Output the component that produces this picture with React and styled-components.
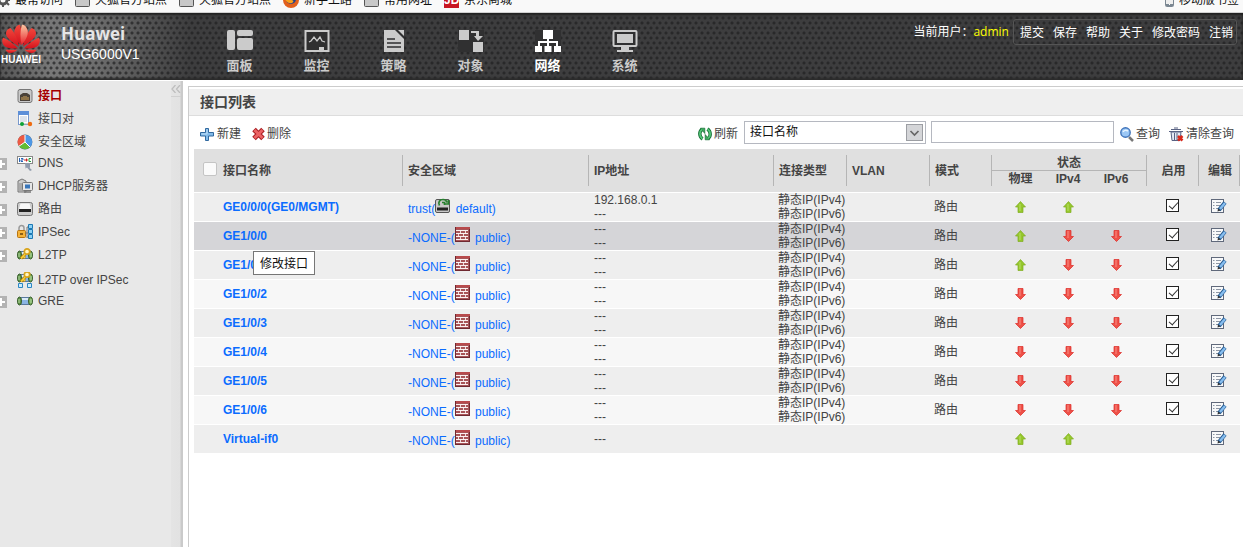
import React from "react";
import styled, { createGlobalStyle, css } from "styled-components";

const GlobalStyle = createGlobalStyle`
  * {
    box-sizing: border-box;
  }

  body {
    margin: 0;
    background-color: #fff;
    color: #444;
    font-family: "Liberation Sans", "Noto Sans CJK SC", sans-serif;
    font-size: 12px;
    line-height: 16px;
  }

  a {
    color: inherit;
    text-decoration: none;
  }

  svg {
    display: block;
    flex: none;
  }
`;

const Page = styled.div`
  min-height: 100vh;
  display: flex;
  flex-direction: column;
`;

/* ---------- bookmarks ---------- */

const BookmarkBar = styled.nav`
  height: 13px;
  padding: 0 4px 3px 0;
  overflow: hidden;
  display: flex;
  align-items: flex-end;
  gap: 12px;
  background-color: #f9f9f9;
  border-bottom: 1px solid #d0d0d0;
`;

const Bookmark = styled.a`
  display: flex;
  align-items: center;
  gap: 5px;
  height: 18px;
  color: #111;
  white-space: nowrap;
  margin-left: ${props => (props.$last ? "auto" : "0")};
`;

const JdMark = styled.span`
  width: 15px;
  height: 16px;
  line-height: 17px;
  background-color: #c81623;
  color: #fff;
  font-size: 12px;
  font-weight: bold;
  text-align: center;
`;

/* ---------- header ---------- */

const Header = styled.header`
  display: flex;
  height: 67px;
  background-color: #3d3d3e;
  background-image: radial-gradient(circle, rgba(32, 32, 33, 0.7) 1px, transparent 2px),
    radial-gradient(circle, rgba(32, 32, 33, 0.7) 1px, transparent 2px),
    linear-gradient(
      90deg,
      #555 0,
      #777 50px,
      #707070 90px,
      rgba(61, 61, 62, 0) 190px
    );
  background-size: 6px 10px, 6px 10px, 100% 100%;
  background-position: 0 0, 3px 5px, 0 0;
  box-shadow: inset 0 2px 2px #222, inset 0 -2px 2px #2c2c2c;
`;

const Brand = styled.div`
  width: 201px;
  display: flex;
  gap: 20px;
  padding: 11px 0 0 1px;
  color: #fff;
`;

const Logo = styled.div`
  width: 40px;
  font-size: 10px;
  line-height: 10px;
  font-weight: bold;
`;

const Product = styled.div`
  font-size: 14px;
  line-height: 20px;
`;

const ProductName = styled.div`
  color: #e6e6e6;
  font-family: "Open Sans", "Noto Sans", sans-serif;
  font-size: 17px;
  font-weight: bold;
`;

const MainNav = styled.nav`
  display: flex;
  flex: 1;
`;

const NavItem = styled.a`
  width: 77px;
  display: flex;
  flex-direction: column;
  align-items: center;
  gap: 4px;
  padding-top: 16px;
  font-size: 13px;
  line-height: 18px;
  font-weight: bold;
  color: ${props => (props.$active ? "#fff" : "#cbcbcb")};
`;

const UserArea = styled.div`
  display: flex;
  align-items: flex-start;
  gap: 4px;
  padding: 6px 6px 0 0;
  color: #fff;
  line-height: 26px;
`;

const UserName = styled.span`
  color: #ff0;
  font-family: "Open Sans", "Noto Sans", sans-serif;
`;

const UserMenu = styled.nav`
  display: flex;
  gap: 9px;
  height: 26px;
  padding: 0 3px 0 6px;
  border: 1px solid #555;
  border-radius: 3px;
`;

/* ---------- sidebar ---------- */

const Body = styled.div`
  flex: 1;
  display: flex;
  gap: 5px;
  padding-top: 1px;
`;

const Sidebar = styled.aside`
  width: 183px;
  flex: none;
  display: flex;
  background-color: #e8e8e8;
`;

const Tree = styled.ul`
  flex: 1;
  margin: 0;
  padding: 3px 0 0;
  list-style: none;
`;

const TreeItem = styled.li`
  height: 23px;
  display: flex;
  align-items: center;
  ${props =>
    props.$branch
      ? css`
          padding-bottom: 3px;
        `
      : css`
          padding: 1px 0 0 17px;
        `}
`;

const ExpandButton = styled.button`
  width: 17px;
  padding: 2px 0 0;
  border: 0;
  background: none;
`;

const TreeLink = styled.a`
  display: flex;
  align-items: center;
  gap: 5px;
  color: ${props => (props.$active ? "#a50000" : "#444")};
  font-weight: ${props => (props.$active ? "bold" : "normal")};
`;

const CollapseRail = styled.div`
  width: 12px;
  background: linear-gradient(90deg, #e4e4e4 0, #e2e2e2 9px, #cacaca 10px);
`;

const CollapseButton = styled.button`
  width: 10px;
  height: 16px;
  padding: 0;
  border: 0;
  border-bottom: 1px solid #d0d0d0;
  background: none;
`;

/* ---------- panel ---------- */

const Panel = styled.main`
  flex: 1;
  min-width: 0;
  margin-top: 5px;
  border: 1px solid #ccc;
  border-width: 1px 0 0 1px;
`;

const PanelTitle = styled.h1`
  margin: 2px 0 0;
  padding: 0 11px;
  background-color: #efefef;
  border-bottom: 1px solid #ddd;
  font-size: 14px;
  line-height: 26px;
  font-weight: bold;
`;

const Toolbar = styled.div`
  display: flex;
  align-items: center;
  height: 33px;
  padding: 0 9px 0 11px;
`;

const ToolButton = styled.button`
  display: flex;
  align-items: center;
  gap: 2px;
  margin: 3px 11px 0 0;
  padding: 0;
  border: 0;
  background: none;
  color: #444;
  font: inherit;
  white-space: nowrap;
`;

const SearchForm = styled.form`
  display: flex;
  align-items: center;
  margin-left: auto;

  ${ToolButton} {
    margin-right: 6px;
  }

  ${ToolButton}:last-child {
    margin: 3px 0 0 3px;
  }
`;

const SelectBox = styled.span`
  position: relative;
  margin: 0 5px 1px 0;

  svg {
    position: absolute;
    top: 3px;
    right: 3px;
    pointer-events: none;
  }
`;

const Select = styled.select`
  display: block;
  appearance: none;
  width: 182px;
  height: 23px;
  padding: 0 5px;
  border: 1px solid #b5b8c0;
  border-radius: 0;
  background-color: #fff;
  color: #111;
  font: inherit;
`;

const SearchInput = styled.input`
  width: 183px;
  height: 22px;
  margin: 0 6px 2px 0;
  padding: 0 6px;
  border: 1px solid #b5b8c0;
  font: inherit;
`;

/* ---------- table ---------- */

const TableWrap = styled.div`
  padding: 0 3px 0 5px;
`;

const Table = styled.table`
  width: 100%;
  table-layout: fixed;
  border-collapse: separate;
  border-spacing: 0;
`;

const HeadRow = styled.tr`
  height: ${props => (props.$lower ? "21px" : "22px")};
  background-color: #e0e0e0;
`;

const HeadCell = styled.th`
  padding: 0;
  text-align: ${props => (props.$center ? "center" : "left")};
  vertical-align: ${props => props.$valign || "middle"};
`;

const HeadLabel = styled.div`
  display: flex;
  align-items: center;
  justify-content: ${props => (props.$center ? "center" : "flex-start")};
  height: 31px;
  padding: 1px 0 0 ${props => (props.$center ? "2px" : "5px")};
  border-left: 1px solid #b5b5b5;
  border-right: ${props => (props.$last ? "1px solid #b5b5b5" : "0")};
`;

const NameLabel = styled.label`
  display: flex;
  align-items: center;
  gap: 6px;
  padding-left: 9px;
`;

const GroupLabel = styled.div`
  height: 16px;
  line-height: 16px;
  border-left: 1px solid #b5b5b5;
  border-bottom: 1px solid #b5b5b5;
`;

const SubLabel = styled.div`
  height: 15px;
  line-height: 16px;
  border-left: ${props => (props.$first ? "1px solid #b5b5b5" : "0")};
  padding: ${props => props.$pad || "0"};
`;

const SelectAll = styled.input`
  appearance: none;
  width: 14px;
  height: 14px;
  margin: 0 0 3px;
  border: 1px solid #c4c4c4;
  border-radius: 2px;
  background-color: #fafafa;
`;

const rowColor = props => {
  if (props.$hovered) return "#d5d5d8";
  return props.$striped ? "#f7f7f7" : "#eee";
};

const Row = styled.tr`
  height: 29px;
  background-color: ${rowColor};
`;

const Cell = styled.td`
  position: relative;
  height: 29px;
  padding: ${props => props.$pad || "0 0 0 6px"};
  border-top: 1px solid #fff;
  line-height: 14px;
  text-align: ${props => (props.$center ? "center" : "left")};
  white-space: nowrap;

  > svg {
    margin: 0 auto 1px;
  }
`;

const NameLink = styled.a`
  color: #0b6cff;
  font-weight: bold;
`;

const ZoneLink = styled.a`
  display: block;
  color: #0b6cff;
  line-height: 16px;

  svg {
    display: inline-block;
    margin-right: 2px;
    vertical-align: baseline;
  }
`;

const EnableBox = styled.input`
  appearance: none;
  display: block;
  width: 13px;
  height: 13px;
  margin: 0 auto 3px;
  border: 1px solid #222;
  background-color: #fff;

  &:checked::after {
    content: "";
    display: block;
    width: 8px;
    height: 4px;
    margin: 2px 0 0 2px;
    border: solid #333;
    border-width: 0 0 1px 1px;
    transform: rotate(-48deg);
  }
`;

const EditButton = styled.button`
  padding: 0;
  border: 0;
  background: none;
  display: block;
  margin: 0 auto 2px;
`;

const Tooltip = styled.span`
  position: absolute;
  z-index: 1;
  top: 29px;
  left: 59px;
  padding: 4px 6px 2px;
  border: 1px solid #767676;
  background-color: #fff;
  color: #111;
  line-height: 16px;
`;

/* ---------- icons ---------- */

const Gear = () => (
  <svg width="10" height="16" viewBox="0 0 10 16">
    <circle cx="3" cy="8" r="4" fill="none" stroke="#555" strokeWidth="3" />
    <path d="M3 13v2M7 11l2 2M8 8h2M-1 12l-1 2" stroke="#555" strokeWidth="2" />
  </svg>
);

const Folder = () => (
  <svg width="15" height="16" viewBox="0 0 15 16">
    <rect x=".5" y="2.5" width="14" height="12" rx="1" fill="#c8c8c8" stroke="#555" />
  </svg>
);

const Firefox = () => (
  <svg width="16" height="16" viewBox="0 0 16 16">
    <circle cx="8" cy="8" r="8" fill="#e2601c" />
    <circle cx="8" cy="7" r="5" fill="#23438e" />
    <path d="M2 7c2 1 4 0 6 1 3 0 3 2 1 3-3 1-6-1-7-4z" fill="#f9a11b" />
  </svg>
);

const Phone = () => (
  <svg width="9" height="16" viewBox="0 0 9 16">
    <rect x=".5" y="1.5" width="8" height="13" rx="1" fill="#eee" stroke="#7b8792" />
    <path d="M1 12h7v2H1z" fill="#7b8792" />
    <path d="M4 12h1v1H4z" fill="#fff" />
  </svg>
);

const Petals = () => (
  <>
    <path d="M19.4 21C14 15 12 9 14 5C15.2 2 17 1 19 .8C21 7 21 14 19.4 21z" />
    <path d="M18 22.5C10 18 4.6 13 5 9C5.2 6.5 7 4.5 9.5 4C14 9 17 16 18 22.5z" />
    <path d="M17 24.5C10 25 5 24 2.5 21C.6 18.5 1 15.5 2 13.5C8 16 13 20 17 24.5z" />
    <path d="M16.5 25.8H4.5C6 29.5 11 30.5 16.5 25.8z" />
  </>
);

const HuaweiFlower = () => (
  <svg width="40" height="31" viewBox="0 0 40 31">
    <defs>
      <linearGradient id="petal" x1="0" y1="0" x2="0" y2="1">
        <stop offset="0" stopColor="#f2473c" />
        <stop offset="1" stopColor="#d3101c" />
      </linearGradient>
      <linearGradient id="shine" x1="0" y1="0" x2="0" y2="1">
        <stop offset="0" stopColor="#f9c9a4" />
        <stop offset="1" stopColor="#e8202a" />
      </linearGradient>
    </defs>
    <g fill="url(#petal)">
      <Petals />
      <g transform="translate(40 0) scale(-1 1)">
        <Petals />
      </g>
    </g>
    <path d="M20.6 21C26 15 28 9 26 5C24.8 2 23 1 21 .8C19 7 19 14 20.6 21z" fill="url(#shine)" />
  </svg>
);

const navIcons = {
  panel: (
    <g fill="#cbcbcb">
      <rect x="0" y="1" width="8" height="20" rx="2" />
      <rect x="10" y="1" width="16" height="6" rx="2" />
      <rect x="10" y="9" width="16" height="12" rx="2" />
    </g>
  ),
  monitor: (
    <g fill="none" stroke="#cbcbcb">
      <rect x="1.5" y="2" width="23" height="20" fill="#2f2f30" strokeWidth="2" />
      <path d="M5 13l2-1 3-4 3 4 3-4 2 4 3 1" strokeWidth="1.3" />
      <path d="M15 19.5h5" strokeWidth="3" />
    </g>
  ),
  policy: (
    <g>
      <path d="M3 1h20v22H3z" fill="#303031" />
      <path d="M3 1h11l9 9v13H3z" fill="#cbcbcb" />
      <path d="M17 1h6v6z" fill="#cbcbcb" />
      <path d="M6 10h8M6 14h14M6 18h14" stroke="#2f2f30" strokeWidth="1.5" />
    </g>
  ),
  object: (
    <g fill="#cbcbcb">
      <path d="M0 1h26v22H0z" fill="#303031" />
      <path d="M1 1h10v10H1zM15 13h10v10H15zM13 2h8v5h4l-5 5-4-5h2V4h-5z" />
    </g>
  ),
  network: (
    <g fill="#fff">
      <path d="M0 1h26v22H0z" fill="#303031" />
      <path d="M8 1h10v9H8zM0 17h7v6H0zM9.5 17h7v6h-7zM19 17h7v6h-7z" />
      <path d="M13 10v7M4 17v-4h18v4" fill="none" stroke="#fff" strokeWidth="2" />
    </g>
  ),
  system: (
    <g>
      <rect x="1.5" y="2" width="23" height="15" rx="1" fill="#303031" stroke="#cbcbcb" strokeWidth="2" />
      <path d="M5 5h16v9H5zM9 18h8v3h4v2H5v-2h4z" fill="#cbcbcb" />
    </g>
  )
};

function Tunnel() {
  return (
    <g>
      <rect x="2" y="4.5" width="12" height="7" fill="#8ab4e4" stroke="#59799d" />
      <path d="M4 6h8" stroke="#d9eafa" strokeWidth="2" />
      <ellipse cx="2.5" cy="8" rx="2" ry="4" fill="#5f9447" stroke="#385c2c" />
      <ellipse cx="13.5" cy="8" rx="2" ry="4" fill="#78ae5c" stroke="#385c2c" />
      <path d="M2 6v4M14 6v4" stroke="#b8dca6" />
    </g>
  );
}

function Key() {
  return (
    <g>
      <path d="M9 6l-5 5.5M6 9l2 2" stroke="#b9830b" strokeWidth="3" />
      <path d="M9 6l-5 5.5M6 9l2 2" stroke="#f7cf3c" strokeWidth="1.5" />
      <circle cx="10" cy="4.5" r="2.7" fill="#fff6c4" stroke="#d9a41c" strokeWidth="1.7" />
    </g>
  );
}

const treeIcons = {
  port: (
    <g>
      <rect x="1" y="1.5" width="14" height="13" rx="2" fill="#c9c9c9" stroke="#777" />
      <path d="M3 13V7l3-2h4l3 2v6z" fill="#4b4239" />
      <path d="M5 9v3M7 8v4M9 8v4M11 9v3" stroke="#d3a55b" />
    </g>
  ),
  pair: (
    <g>
      <rect x="1.5" y=".5" width="10" height="13" fill="#fff" stroke="#7898cc" />
      <path d="M1 0h11v4H1z" fill="#5d8fd8" />
      <path d="M3 6h7M3 8h7M3 10h7" stroke="#bbc7d8" />
      <path d="M5 13h8" stroke="#aaa" />
      <circle cx="5" cy="13" r="2" fill="#0ca336" />
      <circle cx="13" cy="13" r="2.2" fill="#ee6b10" />
    </g>
  ),
  zone: (
    <g>
      <circle cx="8" cy="8" r="7.4" fill="#4d6f8f" />
      <path d="M8 8L2 12.2A7 7 0 0 1 8 1z" fill="#ec5a43" />
      <path d="M8 8V1a7 7 0 0 1 5 12z" fill="#4d97e6" />
      <path d="M8 8l5 5A7 7 0 0 1 2 12.200z" fill="#62bd35" />
      <path d="M8 1v7l5 5M8 8l-6 4.2" fill="none" stroke="#fff" />
    </g>
  ),
  dns: (
    <g>
      <rect x=".5" y="1.5" width="15" height="7" fill="#fff" stroke="#888" />
      <path d="M2.5 3v4M4 3.5h2v1.5H4v1.5h2" fill="none" stroke="#2a66b5" />
      <path d="M7 5h4M9.5 3.5v3" stroke="#c22" />
      <path d="M14 3.5h-2v3h2" fill="none" stroke="#229b3d" />
      <path d="M8 8h5v5l-1.500-1L15 15l-2 1-3-3.500-1.500 1z" fill="#919cad" />
    </g>
  ),
  dhcp: (
    <g>
      <path d="M1 3l4-2 4 2v11H1z" fill="#ccc" stroke="#777" />
      <path d="M3 5v8M5 5v8" stroke="#888" />
      <rect x="5.5" y="4.5" width="10" height="8" rx="1" fill="#e6e6e6" stroke="#777" />
      <path d="M8 6.500h5v4H8z" fill="#3976ba" />
      <path d="M7 14h7" stroke="#777" strokeWidth="1.5" />
    </g>
  ),
  route: (
    <g>
      <rect x=".5" y="1.5" width="15" height="13" rx="2" fill="#ccc" stroke="#777" />
      <path d="M3.5 2.5h9l1.500 5.500H2z" fill="#f8f8f8" />
      <path d="M2 8h12v3H2z" fill="#222" />
    </g>
  ),
  ipsec: (
    <g>
      <path d="M2 7V4a2.500 2.500 0 0 1 5 0v3" fill="none" stroke="#999" strokeWidth="1.5" />
      <rect x=".5" y="6.5" width="8" height="7" rx="1" fill="#f5b33a" stroke="#b9740f" />
      <path d="M3 9h3v2H3z" fill="#8d5e14" />
      <path d="M8 9h3M10 3v11M10 3h2M10 13h2" fill="none" stroke="#777" />
      <path d="M11.500 .5h4v4h-4zM11.500 5.500h4v4h-4zM11.500 10.500h4v4h-4z" fill="#8bd1f5" stroke="#1c79b5" />
    </g>
  ),
  l2tp: (
    <g>
      <Tunnel />
      <Key />
    </g>
  ),
  l2tpIpsec: (
    <g>
      <g transform="translate(0 -2)">
        <Tunnel />
        <Key />
      </g>
      <path d="M1.500 11.500h4v4h-4zM10.500 11.500h4v4h-4z" fill="#cdeafa" stroke="#2a87c4" />
    </g>
  ),
  gre: <Tunnel />
};

const Plus = () => (
  <svg width="7" height="12" viewBox="0 0 7 12">
    <path d="M0 0h7v12H0z" fill="#b3b3b3" />
    <path d="M0 6h5M1 2v8" stroke="#fff" strokeWidth="2" />
  </svg>
);

const Chevrons = () => (
  <svg width="10" height="8" viewBox="0 0 10 8">
    <path d="M4.5 0L1 4l3.500 4M9 0L5.500 4 9 8" fill="none" stroke="#bdbdbd" strokeWidth="1.3" />
  </svg>
);

const AddIcon = () => (
  <svg width="15" height="15" viewBox="0 0 15 15">
    <path d="M5.5 1.5h3v4h5v3.500h-5v4.500h-3V9h-5V5.500h5z" fill="#83bbe9" stroke="#31699f" strokeLinejoin="round" />
    <path d="M7 2.5V7H1.500" fill="none" stroke="#c2e0f8" />
  </svg>
);

const DeleteIcon = () => (
  <svg width="13" height="14" viewBox="0 0 13 14">
    <path d="M2 2.500l9 9M11 2.500l-9 9" stroke="#a91e22" strokeWidth="5" />
    <path d="M2.500 3l8 8M10.500 3l-8 8" stroke="#ec6263" strokeWidth="3" />
  </svg>
);

const RefreshIcon = () => (
  <svg width="14" height="14" viewBox="0 0 14 14">
    <path d="M4.5 12C1 9.500 1 4.500 4 2.500M9.500 2C13 4.500 13 9.500 10 11.500" fill="none" stroke="#146d34" strokeWidth="3.4" />
    <path d="M2.500 1.200h4.300v5.300zM11.500 12.800H7.200V7.500z" fill="#3bab5c" stroke="#146d34" strokeWidth=".7" />
    <path d="M4.5 12C1 9.500 1 4.500 4 2.500M9.500 2C13 4.500 13 9.500 10 11.500" fill="none" stroke="#52c476" strokeWidth="1.8" />
  </svg>
);

const SearchIcon = () => (
  <svg width="14" height="15" viewBox="0 0 14 15">
    <path d="M9 10l4 4" stroke="#777" strokeWidth="2.5" />
    <circle cx="5.5" cy="5.5" r="4.7" fill="#9bc7f5" stroke="#3f73ba" strokeWidth="1.4" />
    <path d="M3 5c1-2 3-2 5-1" fill="none" stroke="#e9f5ff" strokeWidth="1.5" />
  </svg>
);

const ClearIcon = () => (
  <svg width="15" height="15" viewBox="0 0 15 15">
    <path d="M2 5h10l-1 8.500H3z" fill="#e5eaf4" stroke="#596283" />
    <path d="M0 4.500h14M2 2.500h10M5 1h4M5.500 6v7M8 6v7" stroke="#596283" />
    <path d="M9 9l4.500 4.500M13.500 9L9 13.500" stroke="#d9281a" strokeWidth="2.5" />
  </svg>
);

const SelectArrow = () => (
  <svg width="17" height="17" viewBox="0 0 17 17">
    <rect x=".5" y=".5" width="16" height="16" fill="#d4d5d8" stroke="#9c9ea3" />
    <path d="M4.500 7l4 4 4-4" fill="none" stroke="#666" strokeWidth="1.7" />
  </svg>
);

const RouterIcon = () => (
  <svg width="15" height="15" viewBox="0 0 15 15">
    <rect x=".5" y="1.500" width="14" height="13" rx="1.500" fill="#c8c8c8" stroke="#555" />
    <path d="M2 9.500h11v3H2z" fill="#222" />
    <path d="M4.500 7.500C2.500 4 5 1.500 8 1.500c2 0 3.500 1 4 3M13.500 2v4H9.500M7 4.500h2.500v2.500" fill="none" stroke="#27802e" strokeWidth="1.7" />
  </svg>
);

const WallIcon = () => (
  <svg width="15" height="15" viewBox="0 0 15 15">
    <path d="M0 0h15v15H0z" fill="#6f2931" />
    <path d="M1 0h14v2H1z" fill="#b84a4c" />
    <path d="M1 2h13v12H1z" fill="#a85558" />
    <path d="M1 3.500h12M1 6.500h12M1 9.500h12M1 12.500h12" stroke="#fbf2f2" />
    <path d="M5.500 4v2M10.500 4v2M3.500 7v2M8.500 7v2M5.500 10v2M10.500 10v2" stroke="#f0dcdc" />
  </svg>
);

const StateArrow = ({ up }) => (
  <svg width="11" height="12" viewBox="0 0 11 12" role="img" aria-label={up ? "up" : "down"}>
    {up ? (
      <path d="M5.5.5L10.500 6H8v5.500H3V6H.5z" fill="#95c72c" stroke="#80ad20" strokeWidth=".7" />
    ) : (
      <path d="M5.5 11.500L.5 6.500H3V.5h5v6h2.500z" fill="#ee5148" stroke="#dc2a25" strokeWidth=".7" />
    )}
    <path d={up ? "M5 3v7" : "M5 1v7"} stroke={up ? "#badf66" : "#f88d84"} />
  </svg>
);

const EditIcon = () => (
  <svg width="16" height="15" viewBox="0 0 16 15">
    <rect x=".5" y=".5" width="12" height="13" fill="#f8f9fa" stroke="#60697b" />
    <path d="M2 3.500h1.500M2 6.500h1.500M2 9.500h1.500M5 3.500h5M5 6.500h4M5 9.500h2" stroke="#8d96a4" />
    <path d="M14 3.500L8 11" stroke="#255b92" strokeWidth="4" />
    <path d="M14 4L9 10" stroke="#86bdef" strokeWidth="2.5" />
    <path d="M6.500 12.500l.5-3 2.500 2z" fill="#333" />
  </svg>
);

/* ---------- data ---------- */

const bookmarks = [
  { text: "最常访问", icon: <Gear /> },
  { text: "火狐官方站点", icon: <Folder /> },
  { text: "火狐官方站点", icon: <Folder /> },
  { text: "新手上路", icon: <Firefox /> },
  { text: "常用网址", icon: <Folder /> },
  { text: "京东商城", icon: <JdMark>JD</JdMark> },
  { text: "移动版书签", icon: <Phone /> }
];

const navItems = [
  { text: "面板", icon: "panel" },
  { text: "监控", icon: "monitor" },
  { text: "策略", icon: "policy" },
  { text: "对象", icon: "object" },
  { text: "网络", icon: "network", active: true },
  { text: "系统", icon: "system" }
];

const userLinks = ["提交", "保存", "帮助", "关于", "修改密码", "注销"];

const treeItems = [
  { text: "接口", icon: "port", active: true },
  { text: "接口对", icon: "pair" },
  { text: "安全区域", icon: "zone" },
  { text: "DNS", icon: "dns", branch: true },
  { text: "DHCP服务器", icon: "dhcp", branch: true },
  { text: "路由", icon: "route", branch: true },
  { text: "IPSec", icon: "ipsec", branch: true },
  { text: "L2TP", icon: "l2tp", branch: true },
  { text: "L2TP over IPSec", icon: "l2tpIpsec" },
  { text: "GRE", icon: "gre", branch: true }
];

const columnWidths = [208, 186, 185, 73, 83, 62, 53, 48, 54, 52, 42];

const port = (name, states, extra) => ({
  name,
  zone: "-NONE-",
  system: "public",
  ip: ["---", "---"],
  types: ["静态IP(IPv4)", "静态IP(IPv6)"],
  mode: "路由",
  enabled: true,
  states,
  ...extra
});

const interfaces = [
  port("GE0/0/0(GE0/MGMT)", ["up", "up"], {
    zone: "trust",
    system: "default",
    ip: ["192.168.0.1", "---"]
  }),
  port("GE1/0/0", ["up", "down", "down"], { hovered: true }),
  port("GE1/0/1", ["up", "down", "down"]),
  port("GE1/0/2", ["down", "down", "down"]),
  port("GE1/0/3", ["down", "down", "down"]),
  port("GE1/0/4", ["down", "down", "down"]),
  port("GE1/0/5", ["down", "down", "down"]),
  port("GE1/0/6", ["down", "down", "down"]),
  port("Virtual-if0", ["up", "up"], {
    ip: ["---"],
    types: [],
    mode: "",
    enabled: false
  })
];

const statePads = ["0 0 0 5px", "0", "0 6px 0 0"];

function InterfaceRow({ item, striped }) {
  return (
    <Row $striped={striped} $hovered={item.hovered}>
      <Cell $pad="0 0 0 29px">
        <NameLink href="#">{item.name}</NameLink>
        {item.hovered && <Tooltip role="tooltip">修改接口</Tooltip>}
      </Cell>
      <Cell>
        <ZoneLink href="#">
          {item.zone}({item.zone === "trust" ? <RouterIcon /> : <WallIcon />}{" "}
          {item.system})
        </ZoneLink>
      </Cell>
      <Cell>
        {item.ip.map((line, i) => (
          <div key={i}>{line}</div>
        ))}
      </Cell>
      <Cell $pad="0 0 0 5px">
        {item.types.map(line => (
          <div key={line}>{line}</div>
        ))}
      </Cell>
      <Cell />
      <Cell $pad="0 0 0 5px">{item.mode}</Cell>
      {statePads.map((pad, i) => (
        <Cell key={i} $center $pad={pad}>
          {item.states[i] && <StateArrow up={item.states[i] === "up"} />}
        </Cell>
      ))}
      <Cell $center $pad="0">
        {item.enabled && (
          <EnableBox type="checkbox" defaultChecked aria-label={`启用 ${item.name}`} />
        )}
      </Cell>
      <Cell $center $pad="0">
        <EditButton type="button" aria-label={`编辑 ${item.name}`}>
          <EditIcon />
        </EditButton>
      </Cell>
    </Row>
  );
}

function InterfaceTable() {
  return (
    <Table>
      <colgroup>
        {columnWidths.map((width, i) => (
          <col key={i} width={width} />
        ))}
      </colgroup>
      <thead>
        <HeadRow>
          <HeadCell rowSpan={2}>
            <NameLabel>
              <SelectAll type="checkbox" />
              接口名称
            </NameLabel>
          </HeadCell>
          {["安全区域", "IP地址", "连接类型", "VLAN", "模式"].map(text => (
            <HeadCell key={text} rowSpan={2}>
              <HeadLabel>{text}</HeadLabel>
            </HeadCell>
          ))}
          <HeadCell colSpan={3} $center $valign="bottom">
            <GroupLabel>状态</GroupLabel>
          </HeadCell>
          <HeadCell rowSpan={2}>
            <HeadLabel $center>启用</HeadLabel>
          </HeadCell>
          <HeadCell rowSpan={2}>
            <HeadLabel $center $last>
              编辑
            </HeadLabel>
          </HeadCell>
        </HeadRow>
        <HeadRow $lower>
          {["物理", "IPv4", "IPv6"].map((text, i) => (
            <HeadCell key={text} $center $valign="top">
              <SubLabel $first={i === 0} $pad={statePads[i]}>
                {text}
              </SubLabel>
            </HeadCell>
          ))}
        </HeadRow>
      </thead>
      <tbody>
        {interfaces.map((item, i) => (
          <InterfaceRow key={item.name} item={item} striped={i % 2 === 1} />
        ))}
      </tbody>
    </Table>
  );
}

export default function App() {
  return (
    <Page>
      <GlobalStyle />
      <BookmarkBar>
        {bookmarks.map((item, i) => (
          <Bookmark key={i} href="#" $last={i === bookmarks.length - 1}>
            {item.icon}
            {item.text}
          </Bookmark>
        ))}
      </BookmarkBar>
      <Header>
        <Brand>
          <Logo>
            <HuaweiFlower />
            HUAWEI
          </Logo>
          <Product>
            <ProductName>Huawei</ProductName>
            USG6000V1
          </Product>
        </Brand>
        <MainNav>
          {navItems.map(item => (
            <NavItem key={item.text} href="#" $active={item.active}>
              <svg width="26" height="24" viewBox="0 0 26 24">
                {navIcons[item.icon]}
              </svg>
              {item.text}
            </NavItem>
          ))}
        </MainNav>
        <UserArea>
          <span>
            当前用户：<UserName>admin</UserName>
          </span>
          <UserMenu>
            {userLinks.map(text => (
              <a key={text} href="#">
                {text}
              </a>
            ))}
          </UserMenu>
        </UserArea>
      </Header>
      <Body>
        <Sidebar>
          <Tree>
            {treeItems.map(item => (
              <TreeItem key={item.text} $branch={item.branch}>
                {item.branch && (
                  <ExpandButton type="button" aria-label={item.text}>
                    <Plus />
                  </ExpandButton>
                )}
                <TreeLink href="#" $active={item.active}>
                  <svg width="16" height="16" viewBox="0 0 16 16">
                    {treeIcons[item.icon]}
                  </svg>
                  {item.text}
                </TreeLink>
              </TreeItem>
            ))}
          </Tree>
          <CollapseRail>
            <CollapseButton type="button" aria-label="收起">
              <Chevrons />
            </CollapseButton>
          </CollapseRail>
        </Sidebar>
        <Panel>
          <PanelTitle>接口列表</PanelTitle>
          <Toolbar>
            <ToolButton type="button">
              <AddIcon />
              新建
            </ToolButton>
            <ToolButton type="button">
              <DeleteIcon />
              删除
            </ToolButton>
            <SearchForm>
              <ToolButton type="button">
                <RefreshIcon />
                刷新
              </ToolButton>
              <SelectBox>
                <Select aria-label="查询条件">
                  <option>接口名称</option>
                </Select>
                <SelectArrow />
              </SelectBox>
              <SearchInput type="text" aria-label="关键字" />
              <ToolButton type="button">
                <SearchIcon />
                查询
              </ToolButton>
              <ToolButton type="button">
                <ClearIcon />
                清除查询
              </ToolButton>
            </SearchForm>
          </Toolbar>
          <TableWrap>
            <InterfaceTable />
          </TableWrap>
        </Panel>
      </Body>
    </Page>
  );
}
